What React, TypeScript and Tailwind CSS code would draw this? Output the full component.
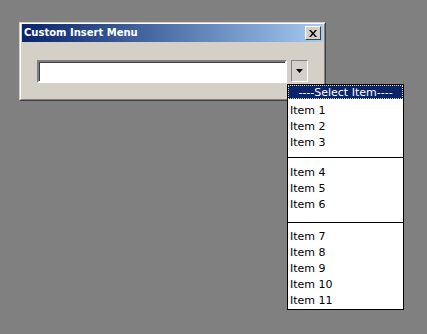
import { ChevronDown } from "lucide-react";

const groups = [
  ["Item 1", "Item 2", "Item 3"],
  ["Item 4", "Item 5", "Item 6"],
  ["Item 7", "Item 8", "Item 9", "Item 10", "Item 11"],
];

function CloseButton() {
  return (
    <div className="mr-[2px] flex h-[14px] w-[16px] items-center justify-center border border-t-white border-l-white border-b-[#404040] border-r-[#404040] bg-[#d4d0c8]">
      <svg width="8" height="7" viewBox="0 0 8 7" className="mt-px">
        <path d="M0 0h2l2 2.5L6 0h2L5 3.5 8 7H6L4 4.5 2 7H0l3-3.5z" fill="#000" />
      </svg>
    </div>
  );
}

function DropButton() {
  return (
    <div className="flex h-[22px] w-[17px] items-center justify-center border border-t-[#808080] border-l-[#808080] border-b-white border-r-white bg-[#d4d0c8]">
      <svg width="7" height="4" viewBox="0 0 7 4">
        <path d="M0 0h7L3.5 4z" fill="#000" />
      </svg>
    </div>
  );
}

export default function App() {
  void ChevronDown;
  return (
    <div className="relative h-[334px] w-[427px] overflow-hidden bg-[#808080] pl-[19px] pt-[22px] font-['DejaVu_Sans',sans-serif]">
      {/* dialog window */}
      <div className="h-[79px] w-[307px] border border-t-[#d4d0c8] border-l-[#d4d0c8] border-b-[#404040] border-r-[#404040]">
        <div className="h-full border border-t-white border-l-white border-b-[#808080] border-r-[#808080] bg-[#d4d0c8] px-px">
          <div className="flex h-[18px] items-center justify-between bg-gradient-to-r from-[#0a246a] to-[#a6caf0] pl-[2px]">
            <span className="text-[10px] font-bold leading-none text-white">Custom Insert Menu</span>
            <CloseButton />
          </div>
          <div className="flex items-start gap-[4px] pl-[15px] pt-[18px]">
            <div className="h-[23px] w-[250px] border-2 border-t-[#808080] border-l-[#808080] border-b-white border-r-white bg-white shadow-[inset_1px_1px_0_#404040]" />
            <DropButton />
          </div>
        </div>
      </div>

      {/* open dropdown list */}
      <div className="absolute left-[287px] top-[84px] h-[226px] w-[117px] border border-black bg-white text-[11px] text-black">
        <div className="flex h-[14px] items-center justify-center border border-dotted border-[#e8d890] bg-[#0a246a] leading-none text-white">
          ----Select Item----
        </div>
        {groups.map((items, gi) => (
          <div key={gi}>
            {gi > 0 && <div className={gi === 1 ? "mt-[6px] h-px bg-black" : "mt-[9px] h-px bg-black"} />}
            <div className={gi === 0 ? "mt-[4px]" : gi === 1 ? "mt-[7px]" : "mt-[6px]"}>
              {items.map((it) => (
                <div key={it} className="h-[16px] pl-[2px] leading-[16px]">
                  {it}
                </div>
              ))}
            </div>
          </div>
        ))}
      </div>
    </div>
  );
}
